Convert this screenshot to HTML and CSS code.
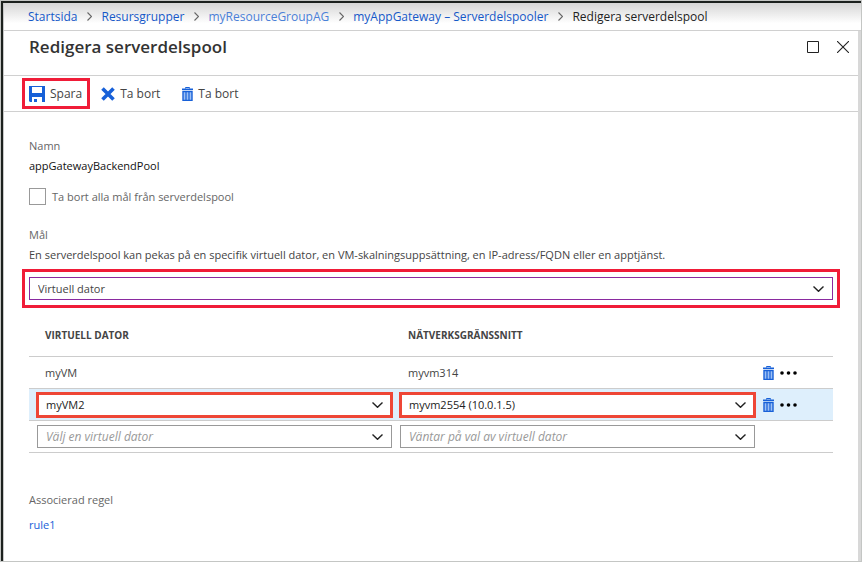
FILE: index.html
```
<!DOCTYPE html>
<html lang="sv">
<head>
<meta charset="utf-8">
<title>Redigera serverdelspool</title>
<link rel="stylesheet" href="styles.css">
</head>
<body>
<svg class="defs" aria-hidden="true">
  <symbol id="chevron" viewBox="0 0 11 6"><path d="M.5 .5 5.500 5.300 10.500 .5" fill="none" stroke="#222" stroke-width="1.400"/></symbol>
  <symbol id="crumb" viewBox="0 0 5 9"><path d="M.5 .5 4.500 4.500.5 8.500" fill="none" stroke="#666" stroke-width="1.100"/></symbol>
  <symbol id="trash" viewBox="0 0 11 14"><path d="M3.500 1.500V.5h4v1" fill="none" stroke="#1760d8"/><path d="M0 1.500h11v1.500H0z" fill="#1760d8"/><path d="M1 4.500h9v9H1z" fill="#9dc0f5" stroke="#1760d8" stroke-width="1.400"/><path d="M4 5v8M7 5v8" stroke="#1760d8" stroke-width="1.200"/></symbol>
</svg>
<div class="window">
  <nav class="crumbs">
    <a href="#">Startsida</a>
    <svg><use href="#crumb"/></svg>
    <a href="#">Resursgrupper</a>
    <svg><use href="#crumb"/></svg>
    <a href="#" class="faded">myResourceGroupAG</a>
    <svg><use href="#crumb"/></svg>
    <a href="#">myAppGateway – Serverdelspooler</a>
    <svg><use href="#crumb"/></svg>
    <span>Redigera serverdelspool</span>
  </nav>
  <div class="blade">
    <header class="title">
      <h1>Redigera serverdelspool</h1>
      <button type="button" aria-label="Maximera"><svg viewBox="0 0 12 12"><path d="M.5 .5h11v11H.5z" fill="none" stroke="#222"/></svg></button>
      <button type="button" aria-label="Stäng"><svg viewBox="0 0 12 12"><path d="M0 0 12 12M12 0 0 12" stroke="#222" stroke-width="1.100"/></svg></button>
    </header>
    <div class="toolbar">
      <button type="button" class="marked"><svg class="save" viewBox="0 0 16 16"><path fill="#1760d8" fill-rule="evenodd" d="M0 0h16v16H13V11H3v5H1l-1-1zM3 1v6h10V1z"/><path fill="#1760d8" d="M5 13h3v3H5z"/></svg>Spara</button>
      <button type="button"><svg class="cross" viewBox="0 0 14 14"><path d="M1.500 1.500 12.500 12.500M12.500 1.500 1.500 12.500" stroke="#1760d8" stroke-width="3.600"/></svg>Ta bort</button>
      <button type="button"><svg class="bin"><use href="#trash"/></svg>Ta bort</button>
    </div>
    <main>
      <div class="label">Namn</div>
      <div class="name">appGatewayBackendPool</div>
      <label class="check"><input type="checkbox">Ta bort alla mål från serverdelspool</label>
      <label class="label" for="target">Mål</label>
      <p>En serverdelspool kan pekas på en specifik virtuell dator, en VM-skalningsuppsättning, en IP-adress/FQDN eller en apptjänst.</p>
      <div class="frame">
        <div class="select target"><select id="target"><option>Virtuell dator</option></select><svg><use href="#chevron"/></svg></div>
      </div>
      <table>
        <thead>
          <tr><th>Virtuell dator</th><th>Nätverksgränssnitt</th><th class="actions"></th></tr>
        </thead>
        <tbody>
          <tr>
            <td><span>myVM</span></td><td><span>myvm314</span></td>
            <td><div class="tools"><button type="button" aria-label="Ta bort"><svg class="bin"><use href="#trash"/></svg></button><button type="button" aria-label="Mer"><svg class="dots" viewBox="0 0 17 4"><circle cx="2" cy="2" r="1.800"/><circle cx="8.500" cy="2" r="1.800"/><circle cx="15" cy="2" r="1.800"/></svg></button></div></td>
          </tr>
          <tr class="selected">
            <td><div class="select picked"><select aria-label="Virtuell dator"><option>myVM2</option></select><svg><use href="#chevron"/></svg></div></td>
            <td><div class="select picked"><select aria-label="Nätverksgränssnitt"><option>myvm2554 (10.0.1.5)</option></select><svg><use href="#chevron"/></svg></div></td>
            <td><div class="tools"><button type="button" aria-label="Ta bort"><svg class="bin"><use href="#trash"/></svg></button><button type="button" aria-label="Mer"><svg class="dots" viewBox="0 0 17 4"><circle cx="2" cy="2" r="1.800"/><circle cx="8.500" cy="2" r="1.800"/><circle cx="15" cy="2" r="1.800"/></svg></button></div></td>
          </tr>
          <tr>
            <td><div class="select empty"><select aria-label="Virtuell dator"><option>Välj en virtuell dator</option></select><svg><use href="#chevron"/></svg></div></td>
            <td><div class="select empty"><select aria-label="Nätverksgränssnitt"><option>Väntar på val av virtuell dator</option></select><svg><use href="#chevron"/></svg></div></td>
            <td></td>
          </tr>
        </tbody>
      </table>
      <div class="label">Associerad regel</div>
      <a class="rule" href="#">rule1</a>
    </main>
  </div>
</div>
</body>
</html>
```
FILE: styles.css
```
* { box-sizing: border-box; }
body {
  margin: 0;
  font: 11px/16px "Open Sans", "Noto Sans", sans-serif;
  color: #444;
  background: #fff;
}
a { color: #1558c8; text-decoration: none; }
button {
  display: flex;
  align-items: center;
  border: 0;
  padding: 0;
  background: none;
  font: inherit;
  color: inherit;
}
svg { display: block; flex: none; }
.defs { position: absolute; width: 0; height: 0; }
.window {
  display: flex;
  flex-direction: column;
  min-height: 100vh;
  border: 1px solid #c4c6c4;
  box-shadow: inset 2px 2px #1c211e, inset 3px 0 #c8c8c8;
  padding: 2px 0 0 3px;
}
.crumbs {
  display: flex;
  align-items: center;
  height: 28px;
  padding-left: 24px;
  border-bottom: 1px solid #d0d0d0;
  background: linear-gradient(#d6d6d6, #fff 75%);
  font-size: 12px;
  white-space: nowrap;
}
.crumbs svg { width: 5px; height: 9px; margin: 0 9px; }
.crumbs span { color: #222; }
.crumbs .faded { color: #4a80d8; }
.crumbs a + svg { margin: 0 9px 0 10px; }
.blade { flex: 1; border-right: 3px solid #d8d8d8; }
.title {
  display: flex;
  align-items: center;
  height: 45px;
  padding: 0 9px 13px 25px;
  border-bottom: 1px solid #d0d0d0;
}
h1 { flex: 1; margin: 0; font-size: 17px; line-height: 24px; font-weight: 600; color: #333; }
.title button { margin-left: 18px; }
.title svg { width: 12px; height: 12px; }
.toolbar {
  display: flex;
  align-items: center;
  gap: 22px;
  height: 36px;
  padding-left: 18px;
  border-bottom: 1px solid #d0d0d0;
  font-size: 12px;
}
.toolbar button { gap: 5px; height: 31px; }
.toolbar .marked { border: 3px solid #f01c38; padding: 0 5px 0 4px; margin-right: -11px; }
.save { width: 16px; height: 16px; }
.cross { width: 14px; height: 14px; }
.bin { width: 11px; height: 14px; }
main { padding: 26px 25px; }
.label { display: block; color: #666; }
.name { margin-top: 4px; color: #111; }
.check { display: flex; align-items: center; gap: 6px; margin: 14px 0 22px; color: #666; }
.check input { appearance: none; width: 17px; height: 17px; margin: 0; border: 1px solid #999; }
main p { margin: 4px 0 6px; }
.frame { margin: 0 -7px; border: 3px solid #f01c38; padding: 5px 4px; }
.select { display: grid; align-items: center; height: 23px; background: #fff; border: 1px solid #999; }
.select > * { grid-area: 1 / 1; }
.select svg { justify-self: end; width: 11px; height: 6px; margin-right: 8px; pointer-events: none; }
.select select {
  appearance: none;
  width: 100%;
  height: 21px;
  border: 0;
  padding: 0 24px 0 8px;
  background: none;
  font: inherit;
  color: #444;
}
.target { border-color: #8a2aa0; }
.picked { height: 24px; outline: 3px solid #ee4636; outline-offset: -2px; }
.picked select { color: #222; }
.select.empty select { color: #999; font-size: 12px; font-style: italic; }
table { width: 100%; table-layout: fixed; border-collapse: separate; border-spacing: 0; }
th, td { height: 32px; padding: 0 0 0 8px; border-bottom: 1px solid #ccc; text-align: left; vertical-align: middle; }
th { height: 49px; padding: 5px 0 0 16px; font-size: 10px; font-weight: 700; text-transform: uppercase; }
.actions { width: 78px; }
td span { padding-left: 8px; }
.selected td { background: #deeffc; }
.tools { display: flex; align-items: center; gap: 6px; }
.dots { width: 17px; height: 4px; }
table + .label { margin-top: 39px; }
.rule { display: block; margin-top: 9px; color: #1760d8; }
```
